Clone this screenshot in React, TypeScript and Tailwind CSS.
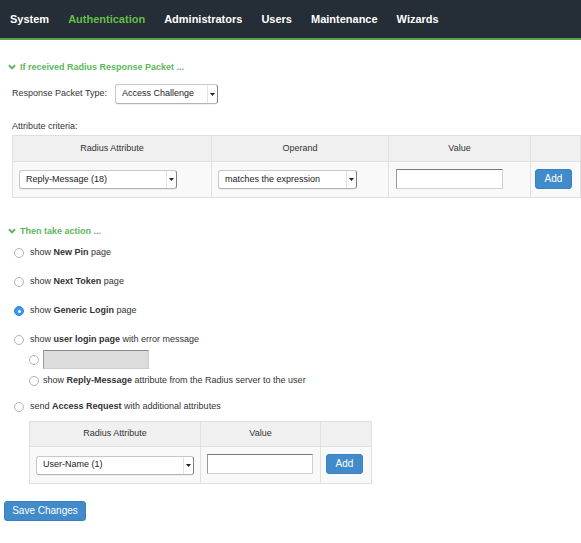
import React from 'react'

const NAV = ['System', 'Authentication', 'Administrators', 'Users', 'Maintenance', 'Wizards']

function Chevron() {
  return (
    <svg width="8" height="6" viewBox="0 0 8 6" className="shrink-0">
      <path d="M1 1.2 L4 4.4 L7 1.2" fill="none" stroke="#5cb85c" strokeWidth="2" />
    </svg>
  )
}

function SectionTitle({ children }: { children: React.ReactNode }) {
  return (
    <div className="flex items-center gap-[4px] pl-[8px] h-[12px] text-[9px] leading-[12px] font-bold text-[#5cb85c]">
      <Chevron />
      <span>{children}</span>
    </div>
  )
}

function Select({ label, className }: { label: string; className: string }) {
  return (
    <div
      className={`flex items-stretch bg-white border border-[#c8c8c8] border-r-[#808080] border-b-[#b4b4b4] rounded-[3px] shadow-[0_1px_1px_rgba(0,0,0,0.06)] ${className}`}
    >
      <span className="flex-1 flex items-center pl-[6px] text-[9px] text-[#222] whitespace-nowrap overflow-hidden">
        {label}
      </span>
      <span className="w-[10px] flex items-center justify-center border-l border-[#e4e4e4]">
        <svg width="5" height="3" viewBox="0 0 5 3">
          <path d="M0 0H5L2.5 3Z" fill="#222" />
        </svg>
      </span>
    </div>
  )
}

function TextBox({ className }: { className: string }) {
  return (
    <div
      className={`h-[20px] bg-white border border-[#cfcfcf] border-t-[#7a7a7a] border-l-[#9a9a9a] ${className}`}
    />
  )
}

function BlueButton({ children, className }: { children: React.ReactNode; className: string }) {
  return (
    <button
      type="button"
      className={`block h-[20px] bg-[#428bca] border border-[#3a7fc0] rounded-[3px] text-white text-[10px] leading-none ${className}`}
    >
      {children}
    </button>
  )
}

function Radio({ checked }: { checked?: boolean }) {
  if (checked) {
    return (
      <span className="w-[10px] h-[10px] rounded-full bg-[#3b97f4] border border-[#2f86e0] flex items-center justify-center shrink-0">
        <span className="w-[3px] h-[3px] rounded-full bg-white" />
      </span>
    )
  }
  return <span className="w-[10px] h-[10px] rounded-full bg-white border border-[#b4b4b4] shrink-0" />
}

function RadioRow({ children, checked }: { children: React.ReactNode; checked?: boolean }) {
  return (
    <div className="flex items-center gap-[6px] pl-[14px] h-[12px] text-[9px] text-[#333]">
      <Radio checked={checked} />
      <span>{children}</span>
    </div>
  )
}

const th = 'border border-[#e0e0e0] bg-[#f0f0f0] font-normal text-[9px] text-[#333] text-center'
const td = 'border border-[#e0e0e0] bg-[#f9f9f9] align-middle'

export default function App() {
  return (
    <div className="min-h-[543px] bg-white text-[#333]" style={{ fontFamily: '"Liberation Sans", Arial, sans-serif' }}>
      <nav className="h-[40px] bg-[#252d37] border-b-2 border-[#5aa54a] flex items-center pl-[10px] gap-[19px]">
        {NAV.map(n => (
          <span
            key={n}
            className={`text-[11px] font-bold ${n === 'Authentication' ? 'text-[#62bf45]' : 'text-white'}`}
          >
            {n}
          </span>
        ))}
      </nav>

      <div className="pt-[21px]">
        <SectionTitle>If received Radius Response Packet ...</SectionTitle>

        <div className="mt-[11px] flex items-center pl-[12px] gap-[8px] text-[9px]">
          <span>Response Packet Type:</span>
          <Select label="Access Challenge" className="w-[103px] h-[20px]" />
        </div>

        <div className="mt-[16px] pl-[12px] text-[9px] leading-[12px]">Attribute criteria:</div>

        <table className="mt-[3px] ml-[12px] w-[569px] table-fixed border-collapse">
          <thead>
            <tr className="h-[26px]">
              <th className={`${th} w-[199px]`}>Radius Attribute</th>
              <th className={`${th} w-[177px]`}>Operand</th>
              <th className={`${th} w-[142px]`}>Value</th>
              <th className={th}></th>
            </tr>
          </thead>
          <tbody>
            <tr className="h-[36px]">
              <td className={`${td} pl-[6px]`}>
                <Select label="Reply-Message (18)" className="w-[158px] h-[19px]" />
              </td>
              <td className={`${td} pl-[6px]`}>
                <Select label="matches the expression" className="w-[139px] h-[19px]" />
              </td>
              <td className={`${td} pl-[7px]`}>
                <TextBox className="w-[107px] -mt-[2px]" />
              </td>
              <td className={`${td} pl-[4px]`}>
                <BlueButton className="w-[37px] -mt-[2px]">Add</BlueButton>
              </td>
            </tr>
          </tbody>
        </table>

        <div className="mt-[27px]">
          <SectionTitle>Then take action ...</SectionTitle>
        </div>

        <div className="mt-[10px] flex flex-col gap-[17px]">
          <RadioRow>
            show <b>New Pin</b> page
          </RadioRow>
          <RadioRow>
            show <b>Next Token</b> page
          </RadioRow>
          <RadioRow checked>
            show <b>Generic Login</b> page
          </RadioRow>
          <RadioRow>
            show <b>user login page</b> with error message
          </RadioRow>
        </div>

        <div className="mt-[4px] pl-[29px] flex items-center gap-[4px]">
          <Radio />
          <div className="w-[106px] h-[19px] bg-[#dcdcdc] border border-[#cccccc] border-t-[#8a8a8a] border-l-[#9a9a9a]" />
        </div>
        <div className="mt-[6px] pl-[29px] flex items-center gap-[4px] h-[12px] text-[9px]">
          <Radio />
          <span>
            show <b>Reply-Message</b> attribute from the Radius server to the user
          </span>
        </div>

        <div className="mt-[14px]">
          <RadioRow>
            send <b>Access Request</b> with additional attributes
          </RadioRow>
        </div>

        <table className="mt-[8px] ml-[29px] w-[343px] table-fixed border-collapse">
          <thead>
            <tr className="h-[25px]">
              <th className={`${th} w-[171px]`}>Radius Attribute</th>
              <th className={`${th} w-[120px]`}>Value</th>
              <th className={th}></th>
            </tr>
          </thead>
          <tbody>
            <tr className="h-[37px]">
              <td className={`${td} pl-[6px]`}>
                <Select label="User-Name (1)" className="w-[158px] h-[19px]" />
              </td>
              <td className={`${td} pl-[6px]`}>
                <TextBox className="w-[106px] -mt-[3px]" />
              </td>
              <td className={`${td} pl-[5px]`}>
                <BlueButton className="w-[37px] -mt-[3px]">Add</BlueButton>
              </td>
            </tr>
          </tbody>
        </table>

        <div className="mt-[17px] pl-[4px]">
          <BlueButton className="w-[82px]">Save Changes</BlueButton>
        </div>
      </div>
    </div>
  )
}
